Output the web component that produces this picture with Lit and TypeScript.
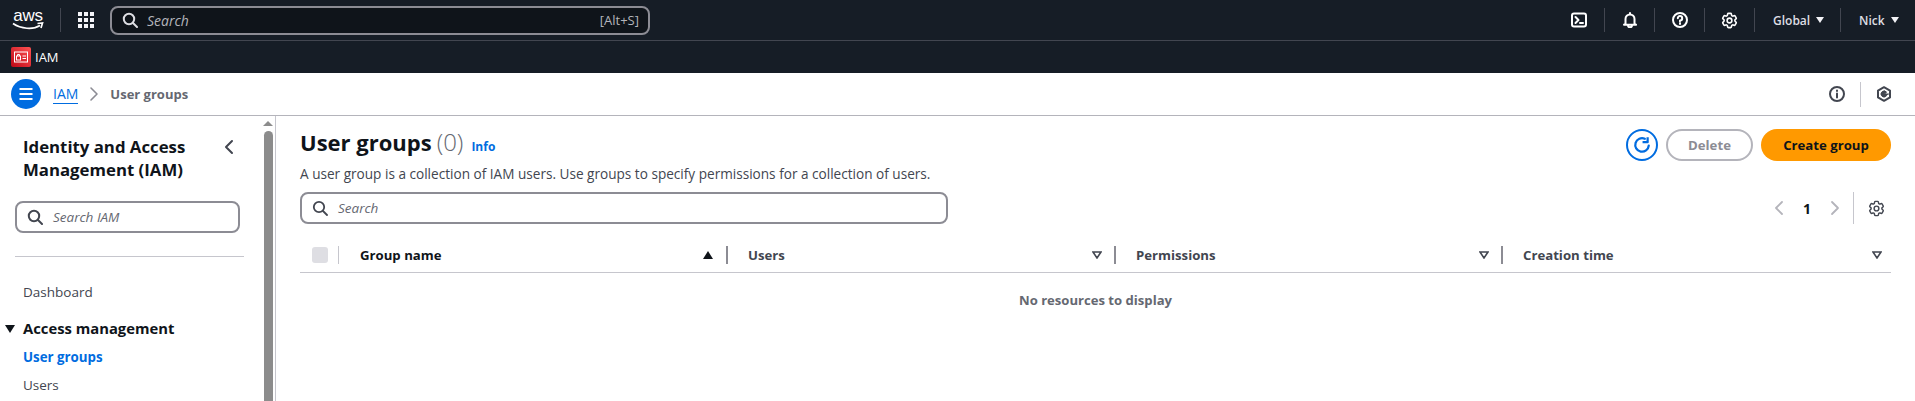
import { LitElement, css, html, svg } from "lit";
import { customElement } from "lit/decorators.js";

const searchIcon = html`<svg class="ico" viewBox="0 0 16 16" width="16" height="16"><circle cx="7" cy="7" r="5.2"/><path d="M11 11l4 4"/></svg>`;
const cogPath = svg`<path d="M9.594 3.94c.09-.542.56-.94 1.11-.94h2.593c.55 0 1.02.398 1.11.94l.213 1.281c.063.374.313.686.645.87.074.04.147.083.22.127.325.196.72.257 1.075.124l1.217-.456a1.125 1.125 0 011.37.49l1.296 2.247a1.125 1.125 0 01-.26 1.431l-1.003.827c-.293.24-.438.613-.431.992a6.759 6.759 0 010 .255c-.007.378.138.75.43.99l1.005.828c.424.35.534.954.26 1.43l-1.298 2.247a1.125 1.125 0 01-1.369.491l-1.217-.456c-.355-.133-.75-.072-1.076.124a6.57 6.57 0 01-.22.128c-.331.183-.581.495-.644.869l-.213 1.28c-.09.543-.56.941-1.11.941h-2.594c-.55 0-1.02-.398-1.11-.94l-.213-1.281c-.062-.374-.312-.686-.644-.87a6.52 6.52 0 01-.22-.127c-.325-.196-.72-.257-1.076-.124l-1.217.456a1.125 1.125 0 01-1.369-.49l-1.297-2.247a1.125 1.125 0 01.26-1.431l1.004-.827c.292-.24.437-.613.43-.992a6.932 6.932 0 010-.255c.007-.378-.138-.75-.43-.99l-1.004-.828a1.125 1.125 0 01-.26-1.43l1.297-2.247a1.125 1.125 0 011.37-.491l1.216.456c.356.133.751.072 1.076-.124.072-.044.146-.087.22-.128.332-.183.582-.495.644-.869l.214-1.281z"/><path d="M15 12a3 3 0 11-6 0 3 3 0 016 0z"/>`;
const cog = html`<svg class="ico cog" viewBox="0 0 24 24" width="19" height="19">${cogPath}</svg>`;

@customElement("top-bar")
class TopBar extends LitElement {
  static styles = css`
    :host { display: flex; align-items: center; height: 40px; background: #161d26; border-bottom: 1px solid #424650; color: #fff; box-sizing: content-box; font-family: "Open Sans", sans-serif; }
    .ico { fill: none; stroke: currentColor; stroke-width: 2; stroke-linecap: round; stroke-linejoin: round; }
    .logo { width: 32px; margin-left: 12px; display: flex; flex-direction: column; align-items: center; height: 24px; }
    .logo span { font: 400 17px/15px "Liberation Sans", sans-serif; letter-spacing: -0.3px; }
    .logo svg { margin-top: -1px; }
    .sep { width: 1px; height: 24px; background: #424650; flex: none; }
    .grid { display: grid; grid-template-columns: repeat(3, 4px); gap: 2px; margin: 0 16px 0 17px; }
    .grid i { width: 4px; height: 4px; background: #f3f3f7; }
    .search { width: 540px; height: 29px; box-sizing: border-box; border: 2px solid #8c8c94; border-radius: 8px; background: #0f141a; display: flex; align-items: center; padding: 0 9px 0 10px; gap: 9px; color: #dedee3; }
    .search em { color: #b4b4bb; flex: 1; font-size: 14px; }
    .search b { color: #b4b4bb; font-weight: 400; font-size: 13px; }
    .right { margin-left: auto; display: flex; align-items: center; }
    .right .btn { width: 49px; display: flex; justify-content: center; color: #fff; }
    .right .btn.first { width: 50px; }
    .menu { display: flex; align-items: center; font-size: 12px; color: #dedee3; font-weight: 600; height: 24px; box-sizing: border-box; }
    .menu i { border: 4.5px solid transparent; border-top: 6px solid #f3f3f7; border-bottom: 0; margin-left: 6px; }
    .global { width: 85px; padding-left: 18px; }
    .nick { width: 74px; padding-left: 18px; }
  `;
  render() {
    return html`
      <div class="logo"><span>aws</span>
        <svg width="32" height="9" viewBox="0 0 32 9"><path d="M1 1.5C9 7 21 8 28 3.5" fill="none" stroke="#fff" stroke-width="1.7"/><path d="M25.5 1.5L30.5 1 29 6" fill="none" stroke="#fff" stroke-width="1.7"/></svg>
      </div>
      <div class="sep" style="margin-left:16px"></div>
      <div class="grid">${Array.from({ length: 9 }, () => html`<i></i>`)}</div>
      <div class="search">${searchIcon}<em>Search</em><b>[Alt+S]</b></div>
      <div class="right">
        <div class="btn first"><svg class="ico" viewBox="0 0 16 16" width="16" height="16"><rect x="1" y="1.5" width="14" height="13" rx="2"/><path d="M4.500 5l3 3-3 3M9 11h3"/></svg></div>
        <div class="sep"></div>
        <div class="btn"><svg class="ico" viewBox="0 0 16 16" width="16" height="16"><path d="M8 1v1.400M3.500 11.500V7a4.500 4.500 0 0 1 9 0v4.500l1.500 1.300H2zM6 13.300a2 2 0 0 0 4 0"/></svg></div>
        <div class="sep"></div>
        <div class="btn"><svg class="ico" viewBox="0 0 16 16" width="16" height="16"><circle cx="8" cy="8" r="7"/><path d="M5.800 6.200A2.200 2.200 0 1 1 8 8.400v1M8 11.200v.8"/></svg></div>
        <div class="sep"></div>
        <div class="btn">${cog}</div>
        <div class="sep"></div>
        <div class="menu global">Global<i></i></div>
        <div class="sep"></div>
        <div class="menu nick">Nick<i></i></div>
      </div>
    `;
  }
}

@customElement("service-bar")
class ServiceBar extends LitElement {
  static styles = css`
    :host { display: flex; align-items: center; height: 32px; background: #161d26; padding-left: 11px; gap: 4px; color: #fff; font: 500 13px "Open Sans", sans-serif; }
    .badge { width: 20px; height: 20px; border-radius: 2px; background: linear-gradient(45deg, #bd0816, #ff5252); display: flex; align-items: center; justify-content: center; }
  `;
  render() {
    return html`<div class="badge"><svg width="14" height="12" viewBox="0 0 14 12" fill="none" stroke="#fff" stroke-width="1"><rect x=".5" y="1" width="13" height="10"/><rect x="2.500" y="5" width="4" height="4"/><path d="M3.500 5V3.500h2V5M8.500 5h3.500M8.500 7.500h3.500"/></svg></div><span>IAM</span>`;
  }
}

@customElement("crumb-bar")
class CrumbBar extends LitElement {
  static styles = css`
    :host { display: flex; align-items: center; height: 42px; background: #fff; border-bottom: 1px solid #b4b4bb; padding-left: 11px; font: 14px "Open Sans", sans-serif; }
    .ico { fill: none; stroke: currentColor; stroke-width: 2; stroke-linecap: round; stroke-linejoin: round; }
    .burger { width: 30px; height: 30px; border-radius: 50%; background: #006ce0; display: flex; align-items: center; justify-content: center; }
    .link { margin-left: 12px; color: #006ce0; border-bottom: 1px solid #006ce0; line-height: 19px; font-size: 14px; }
    .chev { margin: 0 11px 0 11px; color: #8c8c94; display: flex; }
    .cur { color: #656871; font-weight: 700; font-size: 13px; }
    .right { margin-left: auto; display: flex; align-items: center; color: #424650; }
    .sep { width: 1px; height: 25px; background: #c6c6cd; margin: 0 15px 0 15px; }
    .right svg:last-child { margin-right: 23px; }
  `;
  render() {
    return html`
      <div class="burger"><svg width="16" height="14" viewBox="0 0 16 14" fill="none" stroke="#fff" stroke-width="2"><path d="M1.500 2h13M1.500 7h13M1.500 12h13"/></svg></div>
      <span class="link">IAM</span>
      <span class="chev"><svg class="ico" viewBox="0 0 10 16" width="10" height="16" style="stroke-width:1.6"><path d="M2 2l6 6-6 6"/></svg></span>
      <span class="cur">User groups</span>
      <div class="right">
        <svg class="ico" viewBox="0 0 16 16" width="16" height="16"><circle cx="8" cy="8" r="7"/><path d="M8 7.500V11.500M8 4.500v.6"/></svg>
        <div class="sep"></div>
        <svg class="ico" viewBox="0 0 16 16" width="16" height="16"><path d="M8 1.200l6 3.400v6.800l-6 3.400-6-3.400V4.600z"/><path d="M10.500 9.800A3 3 0 1 1 10.500 6.200L8.500 8h4" fill="currentColor" stroke-width="1"/></svg>
      </div>
    `;
  }
}

@customElement("side-nav")
class SideNav extends LitElement {
  static styles = css`
    :host { display: flex; width: 275px; flex: none; border-right: 1px solid #c6c6cd; box-sizing: content-box; overflow: hidden; color: #0f141a; font: 14px "Open Sans", sans-serif; }
    .ico { fill: none; stroke: currentColor; stroke-width: 2; stroke-linecap: round; stroke-linejoin: round; }
    .body { width: 263px; flex: none; padding: 19px 19px 0 15px; box-sizing: border-box; }
    .head { display: flex; justify-content: space-between; padding: 0 0 0 8px; }
    h2 { margin: 0; font-size: 16.800px; line-height: 23px; font-weight: 700; }
    .back { color: #424650; margin: 4px 10px 0 0; }
    .search { margin-top: 20px; height: 32px; width: 225px; box-sizing: border-box; border: 2px solid #8c8c94; border-radius: 8px; display: flex; align-items: center; gap: 10px; padding: 0 10px; color: #424650; }
    .search em { color: #656871; font-size: 13.5px; }
    hr { border: 0; border-top: 1px solid #c6c6cd; margin: 23px 0 0; }
    .item { display: block; padding-left: 8px; color: #424650; line-height: 20px; font-size: 13.5px; }
    .dash { margin-top: 25px; }
    .group { margin: 16px 0 0 -10px; display: flex; align-items: center; gap: 8px; font-weight: 700; font-size: 14.800px; line-height: 20px; }
    .group i { border: 5px solid transparent; border-top: 8px solid #0f141a; border-bottom: 0; margin-top: 2px; }
    .active { margin-top: 9px; color: #006ce0; font-weight: 700; font-size: 13.300px; }
    .users { margin-top: 8px; }
    .scroll { width: 10px; margin: 0 3px 0 0; flex: none; display: flex; flex-direction: column; align-items: center; padding-top: 5px; gap: 5px; }
    .scroll i { border: 5px solid transparent; border-bottom: 5px solid #8c8c8c; border-top: 0; }
    .scroll b { display: block; width: 9px; flex: 1; background: #8c8c8c; border-radius: 5px 5px 0 0; }
  `;
  render() {
    return html`
      <div class="body">
        <div class="head">
          <h2>Identity and Access<br />Management (IAM)</h2>
          <svg class="ico back" viewBox="0 0 10 16" width="10" height="16"><path d="M8 2L2 8l6 6"/></svg>
        </div>
        <div class="search">${searchIcon}<em>Search IAM</em></div>
        <hr />
        <a class="item dash">Dashboard</a>
        <div class="group"><i></i>Access management</div>
        <a class="item active">User groups</a>
        <a class="item users">Users</a>
      </div>
      <div class="scroll"><i></i><b></b></div>
    `;
  }
}

@customElement("groups-table")
class GroupsTable extends LitElement {
  static styles = css`
    :host { display: block; flex: 1; padding: 13px 24px 0 24px; min-width: 0; color: #0f141a; font: 14px "Open Sans", sans-serif; }
    .ico { fill: none; stroke: currentColor; stroke-width: 1.8; stroke-linecap: round; stroke-linejoin: round; }
    .top { display: flex; justify-content: space-between; align-items: flex-start; }
    h1 { margin: -3px 0 0; font-size: 22px; line-height: 32px; font-weight: 700; display: flex; align-items: baseline; }
    h1 span { font-weight: 300; color: #656871; margin-left: 5px; font-size: 24px; }
    h1 a { font-size: 12px; color: #006ce0; margin-left: 8px; }
    p { margin: 1px 0 0; font-size: 13.600px; line-height: 20px; color: #424650; }
    .actions { display: flex; gap: 8px; }
    .pill { height: 32px; box-sizing: border-box; border-radius: 16px; display: flex; align-items: center; justify-content: center; font-weight: 700; font-size: 13.200px; }
    .refresh { width: 32px; border: 2px solid #006ce0; color: #006ce0; }
    .delete { width: 87px; border: 2px solid #b4b4bb; color: #8c8c94; }
    .create { width: 130px; background: #f90; color: #0f141a; }
    .tools { display: flex; justify-content: space-between; margin-top: 8px; }
    .search { width: 648px; height: 32px; box-sizing: border-box; border: 2px solid #8c8c94; border-radius: 8px; display: flex; align-items: center; gap: 10px; padding: 0 10px; color: #424650; }
    .search em { color: #656871; font-size: 13.5px; }
    .pager { display: flex; align-items: center; height: 32px; color: #b4b4bb; padding-right: 5px; }
    .pager b { color: #0f141a; margin: 0 19px; font-size: 14px; }
    .pager .sep { width: 1px; height: 32px; background: #c6c6cd; margin: 0 13px 0 13px; }
    .pager .cog { color: #424650; }
    .head { display: grid; grid-template-columns: 38px 388px 388px 387px 1fr; margin-top: 14px; height: 35px; border-bottom: 1px solid #c6c6cd; align-items: center; box-sizing: border-box; }
    .check { display: flex; align-items: center; height: 18px; padding-left: 12px; }
    .check i { width: 16px; height: 16px; background: #dedee3; border-radius: 3px; }
    .col { display: flex; align-items: center; justify-content: space-between; height: 18px; padding: 0 12px 0 20px; border-left: 2px solid #8c8c94; font-weight: 700; font-size: 13.200px; color: #424650; }
    .col.first { border-left: 1px solid #c6c6cd; color: #0f141a; padding: 0 13px 0 21px; }
    .col.last { padding-right: 9px; }
    .up { border: 5px solid transparent; border-bottom: 8px solid #0f141a; border-top: 0; }
    .empty { text-align: center; margin-top: 17px; font-weight: 700; color: #656871; font-size: 13.100px; line-height: 20px; }
  `;
  render() {
    const sortIcon = html`<svg viewBox="0 0 10 8" width="10" height="8" fill="none" stroke="#424650" stroke-width="1.6"><path d="M1 1h8L5 7z"/></svg>`;
    return html`
      <div class="top">
        <div>
          <h1>User groups <span>(0)</span> <a>Info</a></h1>
          <p>A user group is a collection of IAM users. Use groups to specify permissions for a collection of users.</p>
        </div>
        <div class="actions">
          <div class="pill refresh"><svg class="ico" viewBox="0 0 16 16" width="18" height="18" style="stroke-width:2"><path d="M14 8.500A6 6 0 1 1 10.500 2.500"/><path d="M13 1v4.500H8.500" stroke-linecap="butt"/></svg></div>
          <div class="pill delete">Delete</div>
          <div class="pill create">Create group</div>
        </div>
      </div>
      <div class="tools">
        <div class="search">${searchIcon}<em>Search</em></div>
        <div class="pager">
          <svg class="ico" viewBox="0 0 10 16" width="10" height="16"><path d="M8 2L2 8l6 6"/></svg>
          <b>1</b>
          <svg class="ico" viewBox="0 0 10 16" width="10" height="16"><path d="M2 2l6 6-6 6"/></svg>
          <div class="sep"></div>
          ${cog}
        </div>
      </div>
      <div class="head">
        <div class="check"><i></i></div>
        <div class="col first">Group name <i class="up"></i></div>
        <div class="col">Users ${sortIcon}</div>
        <div class="col">Permissions ${sortIcon}</div>
        <div class="col last">Creation time ${sortIcon}</div>
      </div>
      <div class="empty">No resources to display</div>
    `;
  }
}

@customElement("app-root")
class AppRoot extends LitElement {
  static styles = css`
    :host { display: flex; flex-direction: column; height: 401px; overflow: hidden; background: #fff; }
    .content { display: flex; flex: 1; min-height: 0; }
  `;
  render() {
    return html`
      <top-bar></top-bar>
      <service-bar></service-bar>
      <crumb-bar></crumb-bar>
      <div class="content">
        <side-nav></side-nav>
        <groups-table></groups-table>
      </div>
    `;
  }
}
